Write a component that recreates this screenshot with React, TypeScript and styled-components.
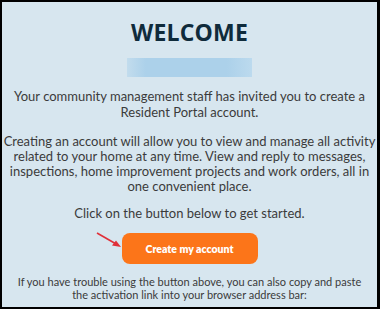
import React from "react";
import styled, { createGlobalStyle } from "styled-components";

const Global = createGlobalStyle`
  html, body { margin: 0; padding: 0; }
  body { background: #fff; font-family: Lato, "Open Sans", sans-serif; }
`;

const Frame = styled.div`
  box-sizing: border-box;
  width: 380px;
  height: 309px;
  border: 2px solid #000;
  border-right-width: 3px;
  background: #d7e6ef;
  display: flex;
  flex-direction: column;
  align-items: center;
  color: #3b3b3b;
  overflow: hidden;
`;

const Title = styled.h1`
  margin: 15px 0 0;
  font-family: "Open Sans", sans-serif;
  font-weight: 700;
  font-size: 23px;
  line-height: 30px;
  color: #0f2b3b;
  letter-spacing: 0.2px;
`;

const Redacted = styled.div`
  margin-top: 11px;
  width: 125px;
  height: 19px;
  background: linear-gradient(90deg, #c2dced 0%, #acd1ea 15%, #acd1ea 80%, #bcdaee 100%);
`;

const Para = styled.p<{ $top: number; $size?: number; $lh?: number }>`
  margin: ${(p) => p.$top}px 0 0;
  text-align: center;
  white-space: nowrap;
  font-size: ${(p) => p.$size ?? 13}px;
  line-height: ${(p) => p.$lh ?? 15}px;
`;

const Line = styled.span`
  display: block;
`;

const ButtonRow = styled.div`
  position: relative;
  margin-top: 12px;
`;

const Button = styled.a`
  display: flex;
  align-items: center;
  justify-content: center;
  width: 136px;
  height: 31px;
  border-radius: 8px;
  background: #fc7519;
  color: #fff;
  font-weight: 800;
  font-size: 10.5px;
  text-decoration: none;
`;

const Arrow = styled.svg`
  position: absolute;
  left: -27px;
  top: -1px;
`;

export default function App() {
  return (
    <>
      <Global />
      <Frame>
        <Title>WELCOME</Title>
        <Redacted />
        <Para $top={11} $lh={16}>
          <Line>Your community management staff has invited you to create a</Line>
          <Line>Resident Portal account.</Line>
        </Para>
        <Para $top={14}>
          <Line>Creating an account will allow you to view and manage all activity</Line>
          <Line>related to your home at any time. View and reply to messages,</Line>
          <Line>inspections, home improvement projects and work orders, all in</Line>
          <Line>one convenient place.</Line>
        </Para>
        <Para $top={12}>Click on the button below to get started.</Para>
        <ButtonRow>
          <Arrow width="30" height="20" viewBox="0 0 30 20">
            <line x1="2" y1="1" x2="22" y2="12.5" stroke="#e0303a" strokeWidth="1.6" />
            <polygon points="26,15 17,13.5 21,8.5" fill="#e0303a" />
          </Arrow>
          <Button>Create my account</Button>
        </ButtonRow>
        <Para $top={11} $size={11} $lh={13}>
          <Line>If you have trouble using the button above, you can also copy and paste</Line>
          <Line>the activation link into your browser address bar:</Line>
        </Para>
      </Frame>
    </>
  );
}
